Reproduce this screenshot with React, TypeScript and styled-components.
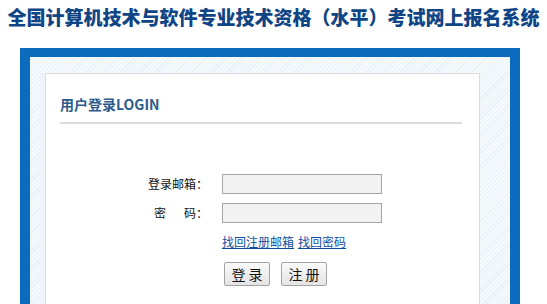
import React from "react";
import styled, { createGlobalStyle } from "styled-components";

const Global = createGlobalStyle`
  html, body { margin: 0; padding: 0; background: #fff; }
  body { font-family: "Noto Sans CJK SC", "Noto Sans", sans-serif; }
`;

const Header = styled.h1`
  margin: 0;
  height: 48px;
  padding-top: 6px;
  box-sizing: border-box;
  text-align: center;
  font-size: 19px;
  line-height: 22px;
  font-weight: 900;
  color: #0f4585;
  white-space: nowrap;
  font-family: "Noto Sans CJK SC", sans-serif;
`;

const Frame = styled.div`
  width: 500px;
  margin: 0 auto 0 20px;
  box-sizing: border-box;
  background: #0b6bbd;
  padding: 9px 10px 0 10px;
`;

const Hatch = styled.div`
  background-color: #f7fafd;
  background-image: repeating-linear-gradient(
    135deg,
    #f7fafd 0px,
    #f7fafd 2px,
    #e8f1f9 2px,
    #e8f1f9 3px
  );
  padding: 16px 30px 0 10px;
`;

const Edge = styled.div`
  background: #eef4fa;
  padding: 0 0 0 5px;
`;

const Panel = styled.div`
  background: #fff;
  border: 1px solid #d9dee4;
  border-bottom: none;
  padding: 21px 17px 60px 14px;
`;

const PanelTitle = styled.div`
  font-size: 14px;
  font-weight: bold;
  line-height: 19px;
  color: #2c5b8c;
  font-family: "Noto Sans CJK SC", "Liberation Sans", sans-serif;
  padding-bottom: 8px;
  border-bottom: 2px solid #dcdcdc;
`;

const Form = styled.div`
  margin: 50px 0 0 86px;
  display: grid;
  grid-template-columns: 62px 160px;
  column-gap: 14px;
  row-gap: 9px;
  align-items: center;
`;

const Label = styled.label`
  font-size: 12px;
  line-height: 20px;
  color: #111;
  text-align: right;
  white-space: pre;
`;

const Input = styled.input`
  box-sizing: border-box;
  width: 160px;
  height: 20px;
  border: 1px solid #a5a5a5;
  background: #f2f2f2;
  margin: 0;
  padding: 0 3px;
`;

const Links = styled.div`
  grid-column: 2;
  display: flex;
  gap: 4px;
  margin-top: 2px;
`;

const Link = styled.a`
  font-size: 12px;
  line-height: 16px;
  color: #0c4fa3;
  text-decoration: underline;
  cursor: pointer;
`;

const Buttons = styled.div`
  grid-column: 2;
  display: flex;
  gap: 11px;
  padding-left: 2px;
  margin-top: 3px;
`;

const Button = styled.button`
  width: 46px;
  height: 24px;
  box-sizing: border-box;
  border: 1px solid #a3a3a3;
  border-radius: 2px;
  background: linear-gradient(#fafafa, #e4e4e4);
  font-family: "Noto Sans CJK SC", sans-serif;
  font-size: 14px;
  line-height: 20px;
  color: #111;
  padding: 0;
  cursor: pointer;
`;

export default function App() {
  return (
    <>
      <Global />
      <Header>全国计算机技术与软件专业技术资格（水平）考试网上报名系统</Header>
      <Frame>
        <Hatch>
          <Edge>
            <Panel>
              <PanelTitle>用户登录LOGIN</PanelTitle>
              <Form>
                <Label>{"登录邮箱："}</Label>
                <Input type="text" />
                <Label>{"密\u3000\u2002码："}</Label>
                <Input type="password" />
                <Links>
                  <Link>找回注册邮箱</Link>
                  <Link>找回密码</Link>
                </Links>
                <Buttons>
                  <Button>登 录</Button>
                  <Button>注 册</Button>
                </Buttons>
              </Form>
            </Panel>
          </Edge>
        </Hatch>
      </Frame>
    </>
  );
}
